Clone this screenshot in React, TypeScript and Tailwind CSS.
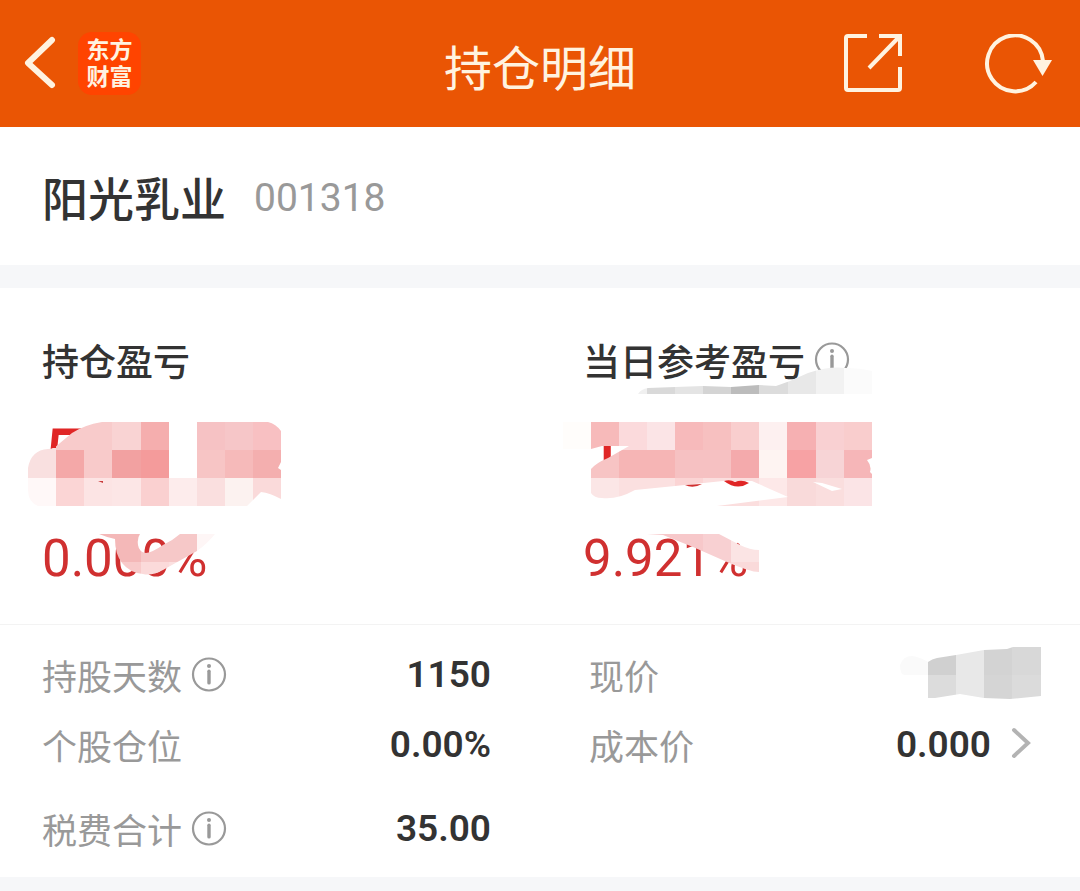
import { useId } from 'react';
import type { ReactNode } from 'react';

interface MosaicProps {
  cells: [x: number, y: number, width: number, height: number, fill: string][];
  shape: string;
}

interface HoldingRowProps {
  label: string;
  value?: string;
  info?: boolean;
  children?: ReactNode;
}

const profitMosaic: MosaicProps = {
  shape:
    'M28 468Q31 450 48 449Q54 449 60 443L72 433Q84 425 102 422H268Q276 424 281 431V462L278 468L281 470V499Q270 493 261 492L247 506H38Q28 502 28 490Z',
  cells: [
    [56, 422, 56, 28, '#f8cbcb'],
    [112, 422, 29, 28, '#f9d3d3'],
    [141, 422, 28, 28, '#f5aeae'],
    [197, 422, 28, 28, '#f6c2c4'],
    [225, 422, 28, 28, '#f6c6c8'],
    [253, 422, 28, 28, '#f8c0c2'],
    [28, 448, 28, 30, '#f9e0e0'],
    [56, 450, 28, 28, '#f4a8a8'],
    [84, 450, 28, 28, '#f8caca'],
    [112, 450, 29, 28, '#f2a1a1'],
    [141, 450, 28, 28, '#f49b9b'],
    [197, 450, 28, 28, '#f7c5c5'],
    [225, 450, 28, 28, '#f6baba'],
    [253, 450, 28, 28, '#f4afaf'],
    [28, 478, 28, 28, '#fff8f8'],
    [56, 478, 28, 28, '#fbd5d5'],
    [84, 478, 28, 28, '#fce4e4'],
    [112, 478, 29, 28, '#fce6e6'],
    [141, 478, 28, 28, '#fad0d0'],
    [169, 478, 28, 28, '#fdecec'],
    [197, 478, 28, 28, '#fadfdf'],
    [225, 478, 28, 28, '#fcf2f0'],
    [253, 478, 28, 28, '#fadada'],
  ],
};

const profitRateMosaic: MosaicProps = {
  shape:
    'M99 534H140Q137 538 138 545Q139 552 146 553Q153 552 163 545Q172 541 180 534H215Q208 543 197 551L163 570Q152 576 143 574Q130 573 122 563Q115 554 115 539Q106 537 99 534Z',
  cells: [
    [99, 534, 42, 28, '#f4b8b8'],
    [141, 534, 56, 28, '#f6c8c8'],
    [197, 534, 28, 28, '#fef6f6'],
    [112, 562, 29, 14, '#f8caca'],
    [141, 562, 28, 14, '#fbdada'],
    [169, 562, 28, 14, '#fbe0e0'],
  ],
};

const dailyTitleMosaic: MosaicProps = {
  shape:
    'M638 394Q641 389 648 388L703 386L731 387L759 385L776 386L790 381L808 373Q830 366 845 368Q860 368 872 371V394Z',
  cells: [
    [638, 366, 9, 28, '#f0f0f0'],
    [647, 366, 28, 28, '#d9d9d9'],
    [675, 366, 28, 28, '#e4e4e4'],
    [703, 366, 28, 28, '#d4d4d4'],
    [731, 366, 28, 28, '#bcbcbc'],
    [759, 366, 29, 28, '#dcdcdc'],
    [788, 366, 28, 28, '#e8e8e8'],
    [816, 366, 28, 28, '#f2f2f2'],
    [844, 366, 28, 28, '#fbfbfb'],
  ],
};

const dailyMosaic: MosaicProps = {
  shape:
    'M563 422H872V458L867 460Q872 466 870 472L872 474V506H717L788 497L752 481H723L675 486L635 490Q617 500 602 498Q594 498 591 493V469Q596 463 608 458L629 446H602L591 449H563ZM813 482L832 491L842 489L822 483Z',
  cells: [
    [563, 422, 28, 28, '#fffdfb'],
    [591, 422, 28, 28, '#f7baba'],
    [619, 422, 28, 28, '#fbdadc'],
    [647, 422, 28, 28, '#fbe4e6'],
    [675, 422, 28, 28, '#f7babb'],
    [703, 422, 28, 28, '#f7c0c0'],
    [731, 422, 28, 28, '#f9cece'],
    [759, 422, 28, 28, '#fdf0f0'],
    [787, 422, 29, 28, '#f6b0b2'],
    [816, 422, 28, 28, '#f9d0d2'],
    [844, 422, 28, 28, '#f9cdcd'],
    [591, 450, 28, 28, '#f7c4c4'],
    [619, 450, 56, 28, '#f6b5b5'],
    [675, 450, 56, 28, '#f6c1c2'],
    [731, 450, 28, 28, '#f4aaac'],
    [759, 450, 28, 28, '#fef4f2'],
    [787, 450, 29, 28, '#f7a2a4'],
    [816, 450, 28, 28, '#f7d4d6'],
    [844, 450, 28, 28, '#f6b6b8'],
    [591, 478, 28, 28, '#fbe6e6'],
    [619, 478, 56, 28, '#fbe0e0'],
    [675, 478, 28, 28, '#fbd4d4'],
    [703, 478, 56, 28, '#fbdede'],
    [759, 478, 28, 28, '#fde8e8'],
    [787, 478, 29, 28, '#f9dada'],
    [816, 478, 28, 28, '#fadede'],
    [844, 478, 28, 28, '#fbe4e6'],
  ],
};

const dailyRateMosaic: MosaicProps = {
  shape: 'M647 534H719L740 545Q750 550 759 550V572Q750 572 727 562L693 547L663 535Z',
  cells: [
    [647, 534, 56, 28, '#f7c8ca'],
    [703, 534, 28, 30, '#f8d0d2'],
    [731, 534, 28, 28, '#fbe4e4'],
    [731, 562, 28, 12, '#fadada'],
  ],
};

const priceMosaic: MosaicProps = {
  shape:
    'M900 665Q903 656 912 656Q920 657 928 662Q932 659 937 658L956 655L984 650L1007 649L1013 647H1041V696L1010 699L984 698L960 694L935 698L928 698V675H905Q900 675 900 665Z',
  cells: [
    [900, 647, 28, 28, '#fafafa'],
    [928, 647, 28, 28, '#d0d0d0'],
    [928, 675, 28, 24, '#dcdcdc'],
    [956, 647, 28, 52, '#e8e8e8'],
    [984, 647, 28, 28, '#d3d3d3'],
    [984, 675, 28, 24, '#d5d5d5'],
    [1012, 647, 29, 28, '#d8d8d8'],
    [1012, 675, 29, 24, '#dbdbdb'],
  ],
};

function Mosaic({ cells, shape }: MosaicProps) {
  const id = useId();

  return (
    <g>
      <clipPath id={id}>
        <path d={shape} clipRule="evenodd" />
      </clipPath>
      <g clipPath={`url(#${id})`} shapeRendering="crispEdges">
        {cells.map(([x, y, width, height, fill]) => (
          <rect key={`${x}-${y}`} x={x} y={y} width={width} height={height} fill={fill} />
        ))}
      </g>
    </g>
  );
}

function InfoIcon() {
  return (
    <svg viewBox="0 0 36 36" className="size-9" fill="none" aria-hidden="true">
      <circle cx="18" cy="17.5" r="16" stroke="#999" strokeWidth="2.2" />
      <circle cx="18" cy="9.1" r="2" fill="#999" />
      <path d="M18 14.3v11.6" stroke="#999" strokeWidth="3.4" strokeLinecap="round" />
    </svg>
  );
}

function HoldingRow({ label, value, info, children }: HoldingRowProps) {
  return (
    <div className="flex h-[70px] items-center">
      <dt className="flex items-center gap-[9px] text-[35px] text-[#999]">
        <span className="pt-2">{label}</span>
        {info && (
          <button type="button" aria-label={`${label}说明`}>
            <InfoIcon />
          </button>
        )}
      </dt>
      <dd className="ml-auto flex items-center gap-[18px] text-[37px] font-semibold text-[#333]">
        {value}
        {children}
      </dd>
    </div>
  );
}

export default function App() {
  return (
    <main className="min-h-screen bg-[#f6f7f9] font-[Roboto,'Noto_Sans_CJK_SC',sans-serif] text-[#333]">
      <header className="grid h-[127px] grid-cols-[1fr_auto_1fr] items-center bg-[#ea5504] px-5 text-[#fff3e0]">
        <div className="flex items-center gap-4">
          <button type="button" aria-label="返回">
            <svg viewBox="0 1 42 56" className="h-14 w-[42px]" fill="none" aria-hidden="true">
              <path d="M32 5L8 28L32 50" stroke="currentColor" strokeWidth="6" strokeLinecap="round" strokeLinejoin="round" />
            </svg>
          </button>
          <a
            href="#"
            className="flex size-[63px] flex-col items-center justify-center rounded-[14px] bg-[#ff4400] text-[23px] leading-[27px] font-bold"
          >
            <span>东方</span>
            <span>财富</span>
          </a>
        </div>
        <h1 className="pt-3 text-[48px]">持仓明细</h1>
        <div className="flex items-center justify-end gap-20">
          <button type="button" aria-label="分享">
            <svg viewBox="0 1 60 60" className="size-[60px]" fill="none" stroke="currentColor" strokeWidth="4" aria-hidden="true">
              <path d="M24 3H5Q3 3 3 5V55Q3 57 5 57H55Q57 57 57 55V34" />
              <path d="M36 3H57V23M56 4L26 35" />
            </svg>
          </button>
          <button type="button" aria-label="刷新">
            <svg viewBox="0 1 77 60" className="h-[60px] w-[77px]" fill="none" aria-hidden="true">
              <path d="M53 49A28 28 0 1 1 60 28" stroke="currentColor" strokeWidth="4" />
              <path d="M50 27H69L59.500 43Z" fill="currentColor" />
            </svg>
          </button>
        </div>
      </header>

      <section className="flex h-[138px] items-center gap-7 bg-white px-[42px] pt-1">
        <h2 className="pt-1 text-[46px] font-medium">阳光乳业</h2>
        <span className="text-[39px] text-[#999]">001318</span>
      </section>

      <section className="relative mt-[23px] grid grid-cols-2 bg-white pt-12 pb-9">
        <div className="pl-[42px]">
          <h3 className="flex h-12 items-center text-[37px] leading-[40px] font-medium">
            <span className="pt-2">持仓盈亏</span>
          </h3>
          <p className="mt-7 text-[78px] leading-[92px] text-[#e02626]">5</p>
          <p className="mt-[26px] text-[51px] leading-[58px] text-[#d03030]">0.000%</p>
        </div>
        <div className="pl-[43px]">
          <h3 className="flex h-12 items-center gap-[9px] text-[37px] leading-[40px] font-medium">
            <span className="pt-2">当日参考盈亏</span>
            <button type="button" aria-label="当日参考盈亏说明">
              <InfoIcon />
            </button>
          </h3>
          <p className="mt-7 text-[78px] leading-[92px] text-[#e02626]">1</p>
          <p className="mt-[26px] text-[51px] leading-[58px] text-[#d03030]">9.921%</p>
        </div>
        <svg
          viewBox="0 288 540 336"
          className="pointer-events-none absolute top-0 left-0 h-[336px] w-[540px]"
          aria-hidden="true"
        >
          <Mosaic {...profitMosaic} />
          <Mosaic {...profitRateMosaic} />
          <path d="M98 481H103V483Z" fill="#c93a3a" />
        </svg>
        <svg
          viewBox="540 288 540 336"
          className="pointer-events-none absolute top-0 left-1/2 h-[336px] w-[540px]"
          aria-hidden="true"
        >
          <Mosaic {...dailyTitleMosaic} />
          <Mosaic {...dailyMosaic} />
          <Mosaic {...dailyRateMosaic} />
          <path d="M685 485L702 484Q693 489 685 485Z" fill="#d03030" />
          <path d="M724 481Q730 479 735 482Q742 479 749 483Q737 491 724 481Z" fill="#e02626" />
        </svg>
      </section>

      <dl className="grid grid-cols-2 border-t border-[#f3f3f3] bg-white pt-[15px] pb-[13px]">
        <div className="pr-[49px] pl-[42px]">
          <HoldingRow label="持股天数" value="1150" info />
          <HoldingRow label="个股仓位" value="0.00%" />
          <div className="mt-[14px]">
            <HoldingRow label="税费合计" value="35.00" info />
          </div>
        </div>
        <div className="pr-[39px] pl-[49px]">
          <HoldingRow label="现价">
            <svg viewBox="900 647 141 56" className="h-14 w-[141px]" aria-hidden="true">
              <Mosaic {...priceMosaic} />
            </svg>
          </HoldingRow>
          <HoldingRow label="成本价" value="0.000">
            <button type="button" aria-label="成本价详情">
              <svg viewBox="0 1 32 36" className="h-9 w-8" fill="none" aria-hidden="true">
                <path d="M5 4L19 17L5 30" stroke="#b3b3b3" strokeWidth="4" strokeLinecap="round" />
              </svg>
            </button>
          </HoldingRow>
        </div>
      </dl>
    </main>
  );
}
